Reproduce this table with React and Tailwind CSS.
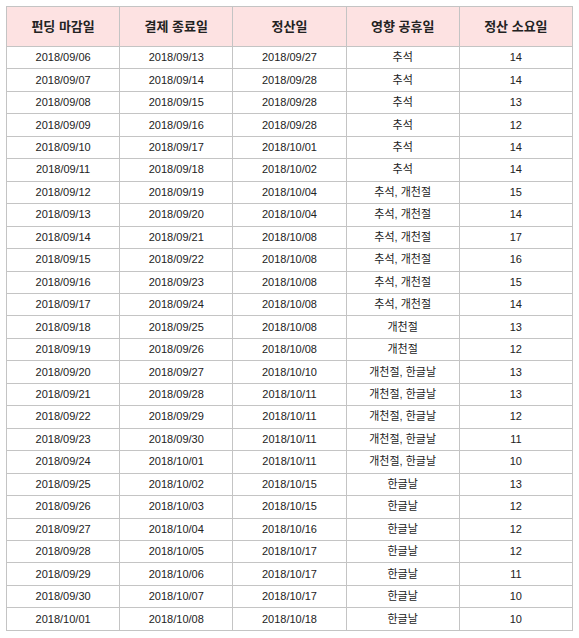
const rows = [
  ['2018/09/06', '2018/09/13', '2018/09/27', '추석', 14],
  ['2018/09/07', '2018/09/14', '2018/09/28', '추석', 14],
  ['2018/09/08', '2018/09/15', '2018/09/28', '추석', 13],
  ['2018/09/09', '2018/09/16', '2018/09/28', '추석', 12],
  ['2018/09/10', '2018/09/17', '2018/10/01', '추석', 14],
  ['2018/09/11', '2018/09/18', '2018/10/02', '추석', 14],
  ['2018/09/12', '2018/09/19', '2018/10/04', '추석, 개천절', 15],
  ['2018/09/13', '2018/09/20', '2018/10/04', '추석, 개천절', 14],
  ['2018/09/14', '2018/09/21', '2018/10/08', '추석, 개천절', 17],
  ['2018/09/15', '2018/09/22', '2018/10/08', '추석, 개천절', 16],
  ['2018/09/16', '2018/09/23', '2018/10/08', '추석, 개천절', 15],
  ['2018/09/17', '2018/09/24', '2018/10/08', '추석, 개천절', 14],
  ['2018/09/18', '2018/09/25', '2018/10/08', '개천절', 13],
  ['2018/09/19', '2018/09/26', '2018/10/08', '개천절', 12],
  ['2018/09/20', '2018/09/27', '2018/10/10', '개천절, 한글날', 13],
  ['2018/09/21', '2018/09/28', '2018/10/11', '개천절, 한글날', 13],
  ['2018/09/22', '2018/09/29', '2018/10/11', '개천절, 한글날', 12],
  ['2018/09/23', '2018/09/30', '2018/10/11', '개천절, 한글날', 11],
  ['2018/09/24', '2018/10/01', '2018/10/11', '개천절, 한글날', 10],
  ['2018/09/25', '2018/10/02', '2018/10/15', '한글날', 13],
  ['2018/09/26', '2018/10/03', '2018/10/15', '한글날', 12],
  ['2018/09/27', '2018/10/04', '2018/10/16', '한글날', 12],
  ['2018/09/28', '2018/10/05', '2018/10/17', '한글날', 12],
  ['2018/09/29', '2018/10/06', '2018/10/17', '한글날', 11],
  ['2018/09/30', '2018/10/07', '2018/10/17', '한글날', 10],
  ['2018/10/01', '2018/10/08', '2018/10/18', '한글날', 10],
];

const heads = ['펀딩 마감일', '결제 종료일', '정산일', '영향 공휴일', '정산 소요일'];

export default function App() {
  return (
    <div className="bg-white pl-[6px] pt-[6px] font-['Liberation_Sans','Noto_Sans_CJK_KR',sans-serif] text-[#222]">
      <table className="w-[567px] table-fixed border-collapse text-[11px]">
        <thead>
          <tr className="h-[40px] bg-[#fde2e2]">
            {heads.map((h) => (
              <th key={h} className="border border-[#c4c4c4] text-[13px] font-bold text-center p-0">
                {h}
              </th>
            ))}
          </tr>
        </thead>
        <tbody>
          {rows.map((r) => (
            <tr key={r[0]} className="h-[22.46px]">
              {r.map((c, i) => (
                <td key={i} className="border border-[#c4c4c4] text-center p-0 leading-none">
                  {c}
                </td>
              ))}
            </tr>
          ))}
        </tbody>
      </table>
    </div>
  );
}
